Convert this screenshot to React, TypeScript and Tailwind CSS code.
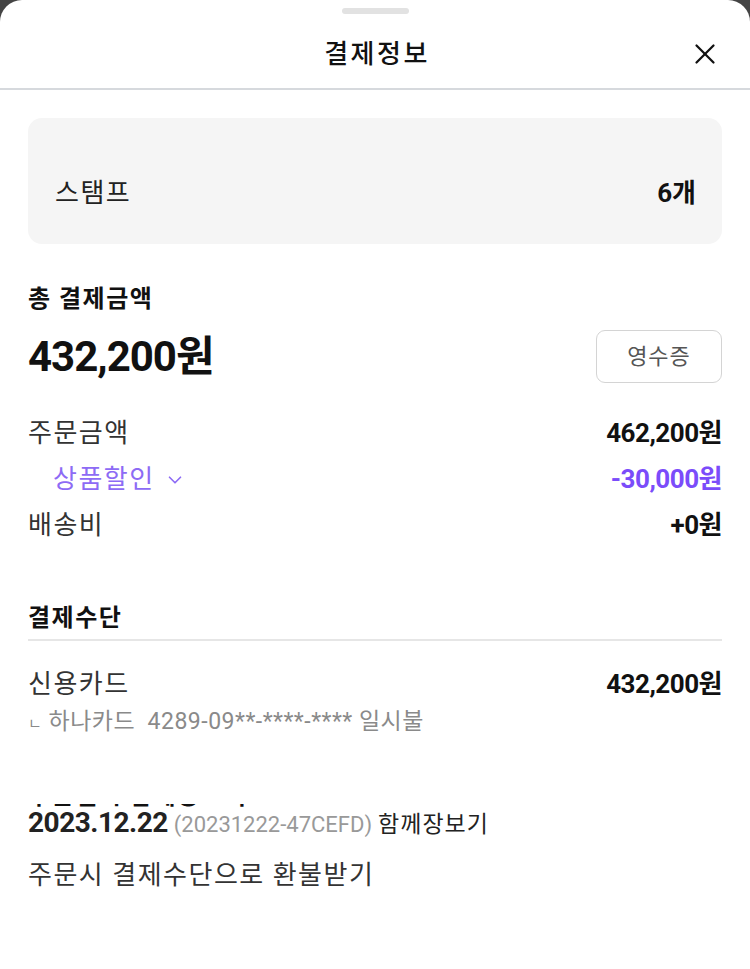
import { ChevronDown, X } from "lucide-react";

const font = "font-['Roboto','Noto_Sans_CJK_KR',sans-serif]";

function Row({
  label,
  value,
  purple = false,
  indent = false,
}: {
  label: React.ReactNode;
  value: string;
  purple?: boolean;
  indent?: boolean;
}) {
  return (
    <div className="flex h-[46px] items-center justify-between">
      <div
        className={`flex items-center text-[26px] leading-[32px] tracking-[1.5px] ${indent ? "pl-[25px]" : ""} ${
          purple ? "text-[#8d6bf5]" : "text-[#333]"
        }`}
      >
        {label}
      </div>
      <div
        className={`text-[26px] font-bold leading-[32px] tracking-[-0.5px] ${
          purple ? "text-[#7b4cfa]" : "text-[#111]"
        }`}
      >
        {value}
      </div>
    </div>
  );
}

export default function App() {
  return (
    <div className={`h-[969px] w-[750px] bg-[#444] ${font}`}>
      <div className="flex h-full flex-col rounded-t-[22px] bg-white">
        {/* handle */}
        <div className="flex h-[20px] justify-center pt-[8px]">
          <div className="h-[6px] w-[67px] rounded-full bg-[#e2e2e2]" />
        </div>

        {/* header */}
        <div className="flex h-[70px] items-center justify-between border-b-2 border-[#d6d9dd] px-[28px]">
          <div className="w-[32px]" />
          <h2 className="pl-[6px] text-[26px] font-medium leading-[34px] tracking-[2.5px] text-[#111]">결제정보</h2>
          <X size={34} strokeWidth={1.6} className="text-[#111]" />
        </div>

        <div className="flex flex-col px-[28px]">
          {/* stamp */}
          <div className="mt-[28px] flex h-[126px] items-end justify-between rounded-[14px] bg-[#f5f5f5] pb-[35px] pl-[27px] pr-[26px]">
            <span className="text-[26px] leading-[32px] tracking-[1.5px] text-[#222]">스탬프</span>
            <span className="text-[26px] font-bold leading-[32px] text-[#111]">6개</span>
          </div>

          {/* total */}
          <div className="mt-[40px] text-[24px] font-bold leading-[30px] tracking-[1.5px] text-[#111]">
            총 결제금액
          </div>
          <div className="mt-[16px] flex h-[53px] items-center justify-between">
            <span className="text-[42px] font-bold tracking-[-1px] text-[#111]">432,200원</span>
            <button className="h-[53px] w-[126px] rounded-[9px] border border-[#d4d4d4] text-[22px] tracking-[1px] text-[#555]">
              영수증
            </button>
          </div>

          <div className="mt-[27px] flex flex-col">
            <Row label="주문금액" value="462,200원" />
            <Row
              indent
              purple
              label={
                <>
                  상품할인
                  <ChevronDown size={22} strokeWidth={1.8} className="ml-[9px] mt-[2px]" />
                </>
              }
              value="-30,000원"
            />
            <Row label="배송비" value="+0원" />
          </div>

          {/* payment method */}
          <div className="mt-[55px] border-b-2 border-[#e6e6e6] pb-[6px] text-[24px] font-bold leading-[30px] tracking-[1.5px] text-[#111]">
            결제수단
          </div>
          <div className="mt-[27px] flex items-center justify-between">
            <span className="text-[26px] leading-[32px] tracking-[1.5px] text-[#333]">신용카드</span>
            <span className="text-[26px] font-bold leading-[32px] tracking-[-0.5px] text-[#111]">432,200원</span>
          </div>
          <div className="mt-[7px] text-[23px] leading-[30px] tracking-[0.5px] text-[#8a8a8a]">
            <span className="text-[15px]">ㄴ</span> 하나카드&nbsp; 4289-09**-****-**** 일시불
          </div>

          {/* clipped heading (scrolled under) */}
          <div className="mt-[65px] h-[6px] overflow-hidden">
            <div className="-mt-[23px] text-[24px] font-bold leading-[30px] tracking-[1.5px] text-[#111]">
              주문일시 함께장보기
            </div>
          </div>
          <div className="-mt-[3px] flex items-baseline gap-[6px] leading-[32px]">
            <span className="text-[28px] font-bold tracking-[-0.5px] text-[#222]">2023.12.22</span>
            <span className="text-[22px] text-[#999]">(20231222-47CEFD)</span>
            <span className="text-[23px] tracking-[1px] text-[#222]">함께장보기</span>
          </div>

          <div className="mt-[18px] text-[26px] leading-[32px] tracking-[1.5px] text-[#333]">
            주문시 결제수단으로 환불받기
          </div>
        </div>
      </div>
    </div>
  );
}
